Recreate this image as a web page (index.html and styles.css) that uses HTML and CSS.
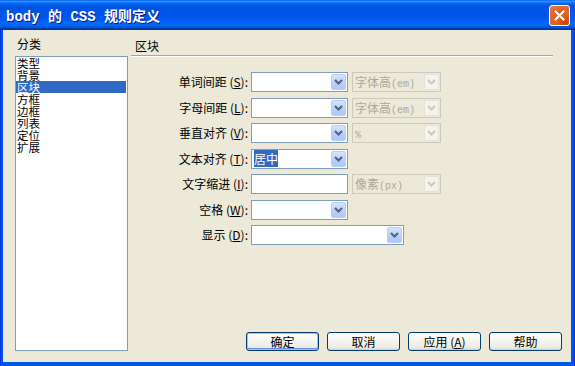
FILE: index.html
```html
<!DOCTYPE html>
<html lang="zh-CN">
<head>
  <meta charset="UTF-8">
  <title>body 的 CSS 规则定义</title>
  <link rel="stylesheet" href="styles.css">
</head>
<body>
  <div class="window">
    <div class="titlebar">
      <span class="title">body 的 CSS 规则定义</span>
      <button class="close" title="关闭">
        <svg width="11" height="11" viewBox="0 0 11 11"><path d="M1.5 1.5 L9.5 9.5 M9.5 1.5 L1.5 9.5" stroke="#fff" stroke-width="2" stroke-linecap="square"/></svg>
      </button>
    </div>

    <div class="client">
      <div class="category">
        <div class="caption">分类</div>
        <ul class="listbox">
          <li>类型</li>
          <li>背景</li>
          <li class="selected">区块</li>
          <li>方框</li>
          <li>边框</li>
          <li>列表</li>
          <li>定位</li>
          <li>扩展</li>
        </ul>
      </div>

      <div class="panel">
        <div class="panel-title">区块</div>

        <div class="form">
          <label class="field-label">单词间距 (<u>S</u>):</label>
          <div class="controls">
            <div class="combo"><span class="value"></span><span class="drop"><svg width="9" height="6" viewBox="0 0 9 6"><path d="M1 1 L4.5 4.5 L8 1" fill="none" stroke="currentColor" stroke-width="2"/></svg></span></div>
            <div class="combo unit disabled"><span class="value">字体高<small>(em)</small></span><span class="drop"><svg width="9" height="6" viewBox="0 0 9 6"><path d="M1 1 L4.5 4.5 L8 1" fill="none" stroke="currentColor" stroke-width="2"/></svg></span></div>
          </div>

          <label class="field-label">字母间距 (<u>L</u>):</label>
          <div class="controls">
            <div class="combo"><span class="value"></span><span class="drop"><svg width="9" height="6" viewBox="0 0 9 6"><path d="M1 1 L4.5 4.5 L8 1" fill="none" stroke="currentColor" stroke-width="2"/></svg></span></div>
            <div class="combo unit disabled"><span class="value">字体高<small>(em)</small></span><span class="drop"><svg width="9" height="6" viewBox="0 0 9 6"><path d="M1 1 L4.5 4.5 L8 1" fill="none" stroke="currentColor" stroke-width="2"/></svg></span></div>
          </div>

          <label class="field-label">垂直对齐 (<u>V</u>):</label>
          <div class="controls">
            <div class="combo"><span class="value"></span><span class="drop"><svg width="9" height="6" viewBox="0 0 9 6"><path d="M1 1 L4.5 4.5 L8 1" fill="none" stroke="currentColor" stroke-width="2"/></svg></span></div>
            <div class="combo unit disabled"><span class="value"><small>%</small></span><span class="drop"><svg width="9" height="6" viewBox="0 0 9 6"><path d="M1 1 L4.5 4.5 L8 1" fill="none" stroke="currentColor" stroke-width="2"/></svg></span></div>
          </div>

          <label class="field-label">文本对齐 (<u>T</u>):</label>
          <div class="controls">
            <div class="combo"><span class="value"><span class="highlight">居中</span></span><span class="drop"><svg width="9" height="6" viewBox="0 0 9 6"><path d="M1 1 L4.5 4.5 L8 1" fill="none" stroke="currentColor" stroke-width="2"/></svg></span></div>
          </div>

          <label class="field-label">文字缩进 (<u>I</u>):</label>
          <div class="controls">
            <div class="textbox"></div>
            <div class="combo unit disabled"><span class="value">像素<small>(px)</small></span><span class="drop"><svg width="9" height="6" viewBox="0 0 9 6"><path d="M1 1 L4.5 4.5 L8 1" fill="none" stroke="currentColor" stroke-width="2"/></svg></span></div>
          </div>

          <label class="field-label">空格 (<u>W</u>):</label>
          <div class="controls">
            <div class="combo"><span class="value"></span><span class="drop"><svg width="9" height="6" viewBox="0 0 9 6"><path d="M1 1 L4.5 4.5 L8 1" fill="none" stroke="currentColor" stroke-width="2"/></svg></span></div>
          </div>

          <label class="field-label">显示 (<u>D</u>):</label>
          <div class="controls">
            <div class="combo wide"><span class="value"></span><span class="drop"><svg width="9" height="6" viewBox="0 0 9 6"><path d="M1 1 L4.5 4.5 L8 1" fill="none" stroke="currentColor" stroke-width="2"/></svg></span></div>
          </div>
        </div>

        <div class="buttons">
          <button class="btn default">确定</button>
          <button class="btn">取消</button>
          <button class="btn">应用 (<u>A</u>)</button>
          <button class="btn">帮助</button>
        </div>
      </div>
    </div>
  </div>
</body>
</html>
```

FILE: styles.css
```css
html, body {
  margin: 0;
  padding: 0;
}

body {
  width: 575px;
  height: 366px;
  overflow: hidden;
  font-family: "Noto Sans CJK SC", "Liberation Sans", sans-serif;
  font-size: 12px;
  color: #000;
}

.window {
  display: flex;
  flex-direction: column;
  width: 575px;
  height: 366px;
  background: linear-gradient(to right, #0831d9, #0055ea 2px, #0055ea calc(100% - 2px), #0831d9);
}

.titlebar {
  flex-shrink: 0;
  display: flex;
  align-items: center;
  height: 30px;
  padding-left: 6px;
  background: linear-gradient(to bottom, #0058ee 0%, #3593ff 4%, #288eff 6%, #127dff 8%, #036ffc 10%, #0262ee 14%, #0057e5 20%, #0054e3 24%, #0055eb 56%, #005bf5 66%, #026afe 76%, #0062ef 86%, #0052d6 92%, #0040ab 94%, #003092 100%);
  box-sizing: border-box;
}

.title {
  font-family: "Liberation Mono", "Noto Sans CJK SC", monospace;
  font-weight: bold;
  font-size: 14px;
  color: white;
  text-shadow: 1px 1px 0 #0a1883;
}

.close {
  margin-left: auto;
  margin-right: 5px;
  width: 21px;
  height: 21px;
  padding: 0;
  border: 1px solid white;
  border-radius: 3px;
  background: radial-gradient(circle at 80% 90%, #cc4600 0%, #dc6527 40%, #e0612a 60%, #e97a4b 100%);
  display: flex;
  align-items: center;
  justify-content: center;
}

.client {
  flex: 1;
  min-height: 0;
  display: flex;
  gap: 3px;
  margin: 0 4px 4px 3px;
  padding: 7px 9px 11px 12px;
  background-color: #ece9d8;
}

.category {
  width: 113px;
  display: flex;
  flex-direction: column;
}

.caption {
  line-height: 14px;
  padding-left: 2px;
  margin-bottom: 5px;
}

.listbox {
  flex: 1;
  list-style: none;
  margin: 0;
  padding: 0;
  border: 1px solid #7f9db9;
  background-color: white;
}

.listbox li {
  font-size: 11.5px;
  line-height: 12px;
  height: 12px;
  padding-left: 1px;
  margin-right: 1px;
}

.listbox li.selected {
  background-color: #316ac5;
  color: white;
}

.panel {
  flex: 1;
  display: flex;
  flex-direction: column;
  margin-top: 2px;
}

.panel-title {
  line-height: 14px;
  padding: 0 0 2px 4px;
  margin-right: 9px;
  border-bottom: 1px solid #aca899;
  box-shadow: 0 1px 0 white;
}

.form {
  display: grid;
  grid-template-columns: 117px auto;
  column-gap: 3px;
  row-gap: 5.5px;
  margin-top: 16px;
}

.field-label {
  text-align: right;
  line-height: 20px;
  white-space: nowrap;
}

.controls {
  display: flex;
  gap: 4px;
}

.combo,
.textbox {
  display: flex;
  width: 97px;
  height: 20px;
  border: 1px solid #7f9db9;
  background-color: white;
  box-sizing: border-box;
}

.combo.wide {
  width: 153px;
}

.combo .value {
  flex: 1;
  padding-left: 2px;
  line-height: 18px;
  white-space: nowrap;
  overflow: hidden;
}

.combo .drop {
  width: 15px;
  margin: 1px;
  border: 1px solid #b9cdf9;
  border-radius: 2px;
  background: linear-gradient(to bottom, #d7e4fe, #b9cdf9 60%, #afc6f8);
  color: #4d6185;
  display: flex;
  align-items: center;
  justify-content: center;
  box-sizing: border-box;
}

.combo.unit {
  width: 89px;
}

.combo.disabled {
  border-color: #cbc8bc;
  background-color: #ece9d8;
  color: #aca899;
}

.combo.disabled .drop {
  border-color: #e5e3d9;
  background: #f4f3ee;
  color: #cbc8bc;
}

.combo small {
  font-size: 10px;
  font-family: "Liberation Mono", monospace;
}

.highlight {
  background-color: #316ac5;
  color: white;
}

.buttons {
  margin-top: auto;
  display: flex;
  justify-content: flex-end;
  gap: 8px;
}

.btn {
  width: 73px;
  height: 19px;
  padding: 0;
  border: 1px solid #003c74;
  border-radius: 3px;
  background: linear-gradient(to bottom, #ffffff, #f4f3ee 50%, #ecebe6 85%, #d6d0c5);
  font-family: "Noto Sans CJK SC", sans-serif;
  font-size: 12px;
  line-height: 17px;
  color: #000;
}

.btn.default {
  box-shadow: inset 0 0 0 1px #a9c1f0, inset 0 -1px 0 1px #6c8ee8;
}
```
